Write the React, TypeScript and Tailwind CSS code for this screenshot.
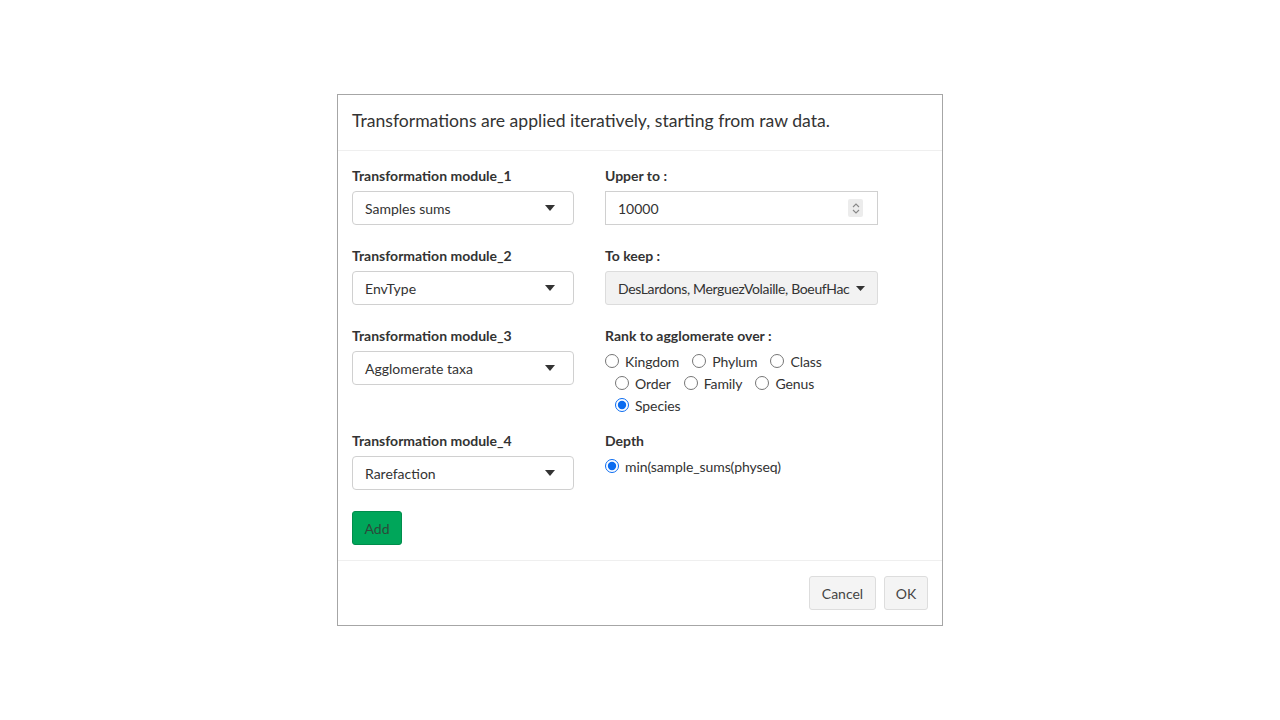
import React from "react";

const font = { fontFamily: '"Lato", "Liberation Sans", sans-serif' };

function Caret() {
  return (
    <svg width="10" height="6" viewBox="0 0 10 6" className="shrink-0">
      <path d="M0 0 L10 0 L5 6 Z" fill="#333" />
    </svg>
  );
}

function SelectBox({ value }: { value: string }) {
  return (
    <div className="flex items-center justify-between w-[222px] h-[34px] border border-[#d0d0d0] rounded-[4px] bg-white pl-[12px] pr-[18px] text-[14px] text-[#333]">
      <span>{value}</span>
      <Caret />
    </div>
  );
}

function Label({ children, mb = true }: { children: React.ReactNode; mb?: boolean }) {
  return (
    <div className={`text-[14px] font-bold text-[#333] leading-[20px] ${mb ? "mb-[5px]" : "mb-[4px]"}`}>{children}</div>
  );
}

function Radio({ label, checked, first }: { label: string; checked?: boolean; first?: boolean }) {
  return (
    <label className={`flex items-center h-[22px] ${first ? "" : "ml-[10px]"}`}>
      <input type="radio" readOnly checked={!!checked} className="m-0 w-[14px] h-[14px] accent-[#0b6cf0]" />
      <span className="ml-[6px] mr-[3px] text-[14px] text-[#333] tracking-[-0.1px]">{label}</span>
    </label>
  );
}

export default function App() {
  return (
    <div className="w-[1280px] h-[720px] bg-white relative" style={font}>
      <div className="absolute left-[337px] top-[94px] w-[606px] h-[532px] border border-[#a6a6a6] bg-white flex flex-col">
        <div className="h-[56px] border-b border-[#efefef] px-[14px] pb-[3px] flex items-center">
          <span className="text-[17.6px] text-[#333]">Transformations are applied iteratively, starting from raw data.</span>
        </div>
        <div className="px-[14px] pt-[15px] pb-[15px] border-b border-[#efefef]">
          <div className="flex">
            <div className="w-[222px] h-[80px]">
              <Label>Transformation module_1</Label>
              <SelectBox value="Samples sums" />
            </div>
            <div className="ml-[31px] w-[273px]">
              <Label>Upper to :</Label>
              <div className="flex items-center justify-between h-[34px] border border-[#d0d0d0] bg-white pl-[12px] pr-[14px] text-[14px] text-[#333]">
                <span>10000</span>
                <div className="w-[15px] h-[18px] bg-[#ececec] rounded-[2px] flex flex-col items-center justify-center gap-[1px]">
                  <svg width="8" height="5" viewBox="0 0 8 5"><path d="M1 4 L4 1 L7 4" stroke="#888" strokeWidth="1.1" fill="none" /></svg>
                  <svg width="8" height="5" viewBox="0 0 8 5"><path d="M1 1 L4 4 L7 1" stroke="#888" strokeWidth="1.1" fill="none" /></svg>
                </div>
              </div>
            </div>
          </div>
          <div className="flex">
            <div className="w-[222px] h-[80px]">
              <Label>Transformation module_2</Label>
              <SelectBox value="EnvType" />
            </div>
            <div className="ml-[31px] w-[273px]">
              <Label>To keep :</Label>
              <div className="flex items-center justify-between h-[34px] border border-[#dcdcdc] rounded-[3px] bg-[#f2f2f2] pl-[12px] pr-[12px] text-[14px] text-[#333]">
                <span className="whitespace-nowrap tracking-[-0.35px]">DesLardons, MerguezVolaille, BoeufHac</span>
                <svg width="9" height="5" viewBox="0 0 9 5" className="shrink-0 ml-[4px]"><path d="M0 0 L9 0 L4.5 5 Z" fill="#333" /></svg>
              </div>
            </div>
          </div>
          <div className="flex">
            <div className="w-[222px] h-[105px]">
              <Label>Transformation module_3</Label>
              <SelectBox value="Agglomerate taxa" />
            </div>
            <div className="ml-[31px] w-[273px]">
              <Label mb={false}>Rank to agglomerate over :</Label>
              <div className="flex flex-wrap w-[230px]">
                <Radio first label="Kingdom" />
                <Radio label="Phylum" />
                <Radio label="Class" />
                <Radio label="Order" />
                <Radio label="Family" />
                <Radio label="Genus" />
                <Radio label="Species" checked />
              </div>
            </div>
          </div>
          <div className="flex">
            <div className="w-[222px] h-[80px]">
              <Label>Transformation module_4</Label>
              <SelectBox value="Rarefaction" />
            </div>
            <div className="ml-[31px] w-[273px]">
              <Label mb={false}>Depth</Label>
              <Radio first checked label="min(sample_sums(physeq)" />
            </div>
          </div>
          <button className="w-[50px] h-[34px] bg-[#00a65a] border border-[#008d4c] rounded-[3px] text-[14px] text-[#2d4a3a]">Add</button>
        </div>
        <div className="flex-1 flex items-center justify-end gap-[8px] px-[14px]">
          <button className="h-[34px] w-[67px] bg-[#f4f4f4] border border-[#dddddd] rounded-[3px] text-[14px] text-[#444]">Cancel</button>
          <button className="h-[34px] w-[44px] bg-[#f4f4f4] border border-[#dddddd] rounded-[3px] text-[14px] text-[#444]">OK</button>
        </div>
      </div>
    </div>
  );
}
